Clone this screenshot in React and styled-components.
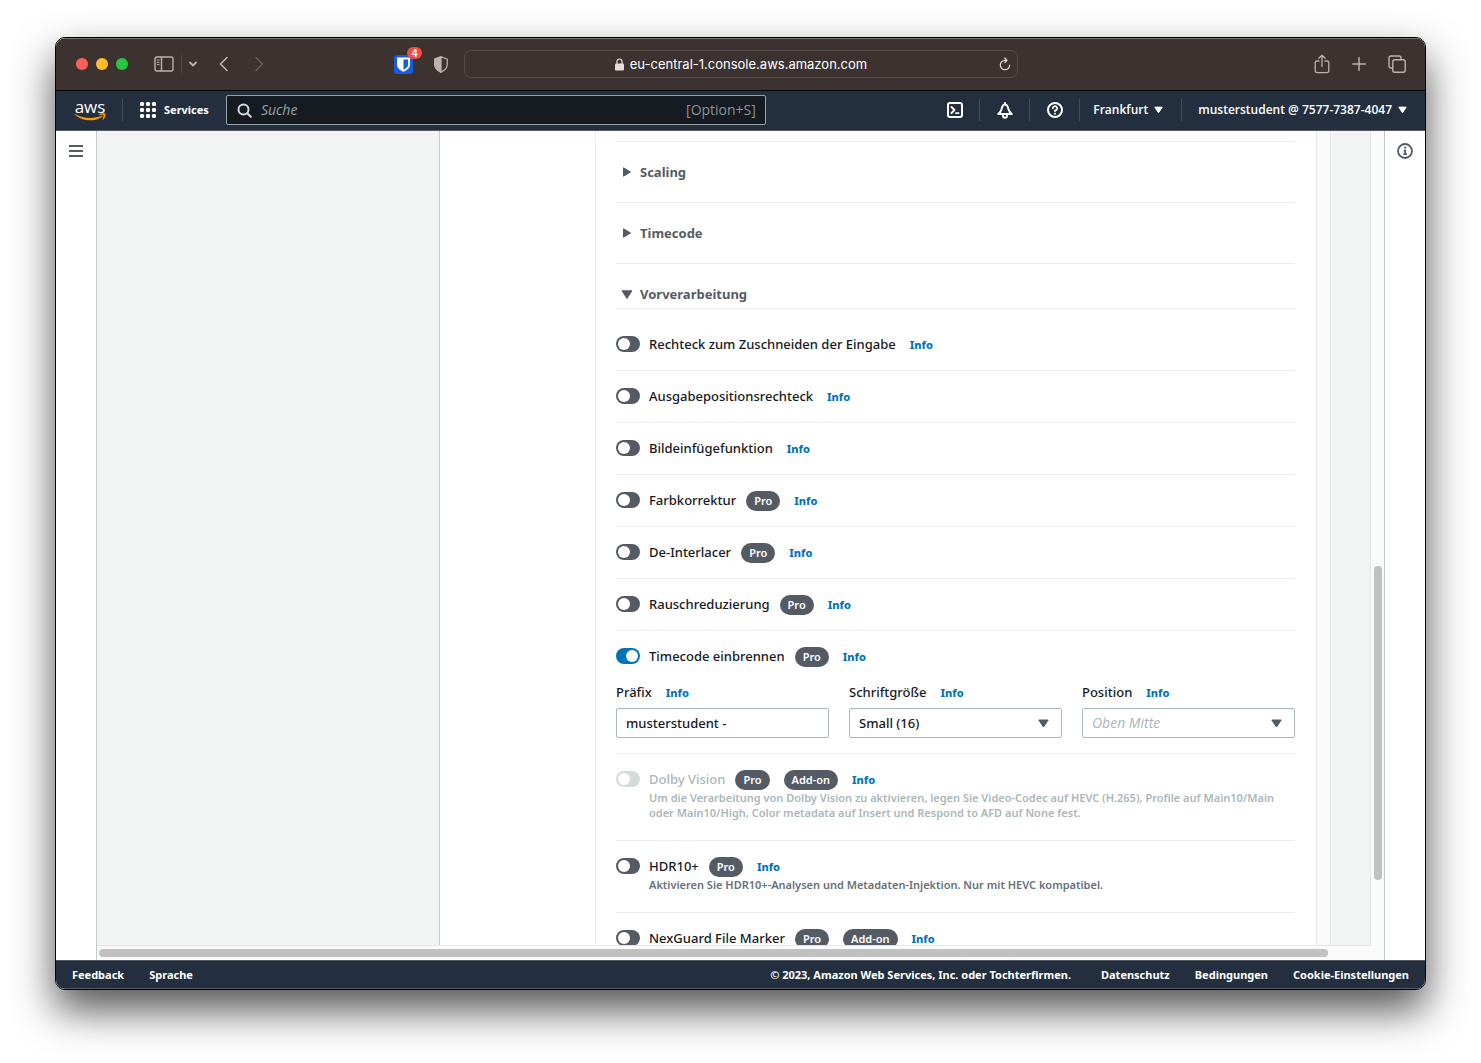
import React from "react";
import styled, { createGlobalStyle, css } from "styled-components";

const GlobalStyle = createGlobalStyle`
  *, *::before, *::after { box-sizing: border-box; }
  body {
    margin: 0;
    background: #fff;
    color: #16191f;
    font-family: "Noto Sans", "Open Sans", sans-serif;
    font-size: 13px;
    font-weight: 500;
    line-height: 20px;
  }
  button, input, select { font: inherit; color: inherit; margin: 0; }
`;

const Desktop = styled.div`
  display: flex;
  height: 100vh;
  padding: 37px 55px 73px;
  overflow: hidden;
`;

const Window = styled.div`
  flex: 1;
  min-width: 0;
  display: flex;
  flex-direction: column;
  border: 1px solid #050505;
  border-radius: 10px;
  overflow: hidden;
  background: #fff;
  box-shadow: 0 20px 42px rgba(0, 0, 0, 0.68);
`;

/* Browser chrome */

const TitleBar = styled.div`
  flex: none;
  display: grid;
  grid-template-columns: 408px minmax(0, 554px) 1fr;
  align-items: center;
  height: 53px;
  padding-bottom: 1px;
  background: #3c3331;
  border-top: 1px solid #746d6b;
  border-bottom: 1px solid #000;
  color: #bab2b0;
`;

const ChromeGroup = styled.div`
  display: flex;
  align-items: center;
  justify-content: ${(p) => (p.$end ? "flex-end" : "flex-start")};
  gap: ${(p) => p.$gap || 0}px;
  padding: ${(p) => p.$pad || "0"};
`;

const Spacer = styled.div`
  flex: ${(p) => p.$grow || 1};
`;

const IconButton = styled.button`
  display: flex;
  align-items: center;
  justify-content: center;
  padding: 0;
  border: 0;
  background: none;
  color: ${(p) => (p.$dim ? "#695f5d" : "inherit")};
  cursor: pointer;
  svg { display: block; }
`;

const Light = styled.button`
  width: 12px;
  height: 12px;
  padding: 0;
  border: 0;
  border-radius: 50%;
  background: ${(p) => p.$color};
`;

const ChromeDivider = styled.span`
  width: 1px;
  height: 18px;
  background: #544b49;
`;

const Extension = styled(IconButton)`
  position: relative;
`;

const Count = styled.span`
  position: absolute;
  top: -8px;
  right: -9px;
  width: 15px;
  height: 12px;
  border-radius: 6px;
  background: #fb4943;
  color: #fff;
  font: 600 10px/12px Inter, sans-serif;
  text-align: center;
`;

const AddressBar = styled.div`
  display: grid;
  grid-template-columns: 24px 1fr 24px;
  align-items: center;
  height: 28px;
  border: 1px solid #544c49;
  border-radius: 7px;
  color: #e4dfde;
`;

const Address = styled.div`
  display: flex;
  align-items: center;
  justify-content: center;
  gap: 6px;
  color: #fff;
  font: 400 13px/20px Inter, sans-serif;
`;

/* Console navigation */

const NavBar = styled.header`
  flex: none;
  display: flex;
  align-items: center;
  height: 40px;
  padding: 0 18px 1px;
  background: #232f3e;
  border-bottom: 1px solid #545b64;
  color: #fff;
  font: 600 12px/20px "Open Sans", sans-serif;
`;

const Logo = styled.a`
  display: flex;
  flex-direction: column;
  align-items: center;
  width: 32px;
  margin-right: 16px;
  color: #fff;
  text-decoration: none;
  font: 500 17px/13px "Open Sans", sans-serif;
`;

const NavDivider = styled.span`
  flex: none;
  width: 1px;
  height: 22px;
  background: #414c59;
`;

const Services = styled(IconButton)`
  gap: 8px;
  margin: 0 17px;
  font: 700 11px/20px "Noto Sans", sans-serif;
`;

const SearchBox = styled.label`
  display: flex;
  align-items: center;
  flex: 0 1 540px;
  gap: 9px;
  height: 30px;
  padding: 0 9px 0 10px;
  border: 1px solid #95a5a6;
  border-radius: 2px;
  background: #161a21;
  color: #d5dbdb;
  font-size: 14px;
  font-weight: 400;
  input {
    flex: 1;
    min-width: 0;
    padding: 0;
    border: 0;
    outline: 0;
    background: none;
  }
  input::placeholder { color: #95a5a6; font-style: italic; opacity: 1; }
`;

const Shortcut = styled.span`
  color: #879596;
`;

const NavIcon = styled(IconButton)`
  width: 49px;
  height: 38px;
`;

const NavMenu = styled(IconButton)`
  gap: 6px;
  padding-left: ${(p) => p.$left}px;
  padding-right: ${(p) => p.$right || 0}px;
  white-space: nowrap;
`;

/* Page body */

const Body = styled.div`
  flex: 1;
  min-height: 0;
  display: flex;
`;

const Rail = styled.aside`
  flex: none;
  display: flex;
  flex-direction: column;
  align-items: center;
  width: 41px;
  padding-top: 12px;
  color: #545b64;
  ${(p) => (p.$right ? "border-left" : "border-right")}: 1px solid #c3caca;
`;

const Viewport = styled.div`
  flex: 1;
  min-width: 0;
  display: grid;
  grid-template-columns: minmax(0, 1fr) 13px;
  grid-template-rows: minmax(0, 1fr) 14px;
  background: #fafafa;
`;

const Scroller = styled.main`
  display: flex;
  min-width: 0;
  overflow: hidden;
  border-right: 1px solid #e7e7e7;
  border-bottom: 1px solid #e7e7e7;
`;

const Gutter = styled.div`
  flex: 0 0 ${(p) => p.$width}px;
  background: ${(p) => p.$color};
  border-right: ${(p) => (p.$line ? `1px solid ${p.$line}` : "0")};
`;

const Panel = styled.section`
  flex: 1;
  min-width: 0;
  padding: 10px 21px 0 20px;
  border-left: 1px solid #eaeded;
  border-right: 1px solid #e3e6e6;
  background: #fff;
`;

const VerticalTrack = styled.div`
  display: flex;
  flex-direction: column;
  padding: 0 2px 0 3px;
`;

const HorizontalTrack = styled.div`
  grid-column: 1 / -1;
  padding: 3px 0 3px 2px;
`;

const Thumb = styled.div`
  border-radius: 4px;
  background: #c1c1c1;
  ${(p) =>
    p.$vertical
      ? css`flex: 314;`
      : css`height: 8px; width: 1229px; max-width: 96%;`}
`;

const SectionToggle = styled.button`
  display: flex;
  align-items: center;
  gap: 7px;
  width: 100%;
  height: ${(p) => (p.$open ? 46 : 61)}px;
  padding: 0 5px;
  padding-top: ${(p) => (p.$open ? 16 : 0)}px;
  border: 0;
  border-top: 1px solid #eaeded;
  border-bottom: ${(p) => (p.$open ? "1px solid #eaeded" : "0")};
  background: none;
  color: #545b64;
  font-weight: 700;
  text-align: left;
`;

const Options = styled.div`
  padding-top: 10px;
`;

const Option = styled.div`
  padding: 15px 0 ${(p) => (p.$tall ? 20 : 15)}px;
  border-bottom: 1px solid #eaeded;
`;

const OptionHead = styled.div`
  display: flex;
  align-items: flex-end;
  height: 21px;
`;

const Switch = styled.input`
  appearance: none;
  flex: none;
  align-self: flex-start;
  display: flex;
  align-items: center;
  justify-content: flex-start;
  width: 24px;
  height: 16px;
  && { margin-top: 2px; }
  padding: 0 2px;
  border-radius: 8px;
  background: #545b64;
  &::before {
    content: "";
    width: 12px;
    height: 12px;
    border-radius: 50%;
    background: #fff;
  }
  &:checked { background: #0073bb; justify-content: flex-end; }
  &:disabled { background: #d5dbdb; }
`;

const OptionLabel = styled.label`
  align-self: flex-start;
  padding-left: 9px;
  color: ${(p) => (p.$muted ? "#aab7b8" : "#16191f")};
  white-space: nowrap;
`;

const Badges = styled.span`
  display: flex;
  gap: 14px;
  padding-left: 10px;
`;

const Badge = styled.span`
  height: 20px;
  padding: 0 8px;
  border-radius: 10px;
  background: #545b64;
  color: #fff;
  font-size: 11px;
  font-weight: 600;
`;

const Info = styled.a`
  padding-left: 14px;
  color: #0073bb;
  font-size: 11px;
  font-weight: 800;
  text-decoration: none;
`;

const Description = styled.p`
  margin: 0;
  padding-left: 33px;
  color: ${(p) => (p.$muted ? "#aab7b8" : "#687078")};
  font-size: 11px;
  font-weight: 600;
  line-height: 15px;
`;

const Fields = styled.div`
  display: grid;
  grid-template-columns: repeat(3, minmax(0, 1fr));
  gap: 20px;
  padding-top: 15px;
`;

const FieldHead = styled.div`
  display: flex;
  align-items: flex-end;
  height: 21px;
  margin-bottom: 5px;
  label { align-self: flex-start; }
`;

const control = css`
  width: 100%;
  height: 30px;
  padding: 0 9px;
  border: 1px solid #aab7b8;
  border-radius: 2px;
  background: #fff;
  outline: 0;
`;

const TextInput = styled.input`
  ${control}
`;

const SelectShell = styled.div`
  display: grid;
  align-items: center;
  > * { grid-area: 1 / 1; }
  > svg { justify-self: end; margin-right: 13px; pointer-events: none; }
`;

const Select = styled.select`
  ${control}
  appearance: none;
  ${(p) => p.$empty && css`color: #aab7b8; font: italic 400 14px/20px "Open Sans", sans-serif;`}
`;

const Footer = styled.footer`
  flex: none;
  display: flex;
  align-items: center;
  gap: 25px;
  height: 29px;
  padding: 0 16px;
  background: #232f3e;
  border-top: 1px solid #545b64;
  border-bottom: 1px solid #545b64;
  color: #fff;
  font-size: 11px;
  font-weight: 700;
  white-space: nowrap;
  a { color: inherit; text-decoration: none; }
`;

const Legal = styled.div`
  display: flex;
  gap: 25px;
  margin-left: auto;
`;

const Copyright = styled.span`
  padding-right: 5px;
`;

/* Icons */

const Stroke = ({ w, h, sw = 1.4, children }) => (
  <svg width={w} height={h} viewBox={`0 0 ${w} ${h}`} fill="none" stroke="currentColor" strokeWidth={sw} strokeLinecap="round" strokeLinejoin="round" aria-hidden="true">
    {children}
  </svg>
);

const Caret = ({ right, w = 10, h = 8 }) => (
  <svg width={right ? 12 : w} height={right ? 10 : h} viewBox={right ? "0 0 12 10" : "0 0 10 8"} fill="currentColor" stroke="currentColor" strokeLinejoin="round" aria-hidden="true">
    <path d={right ? "M2.5 .8 L9.5 5 L2.5 9.2Z" : "M.8 .8 H9.2 L5 7.2Z"} />
  </svg>
);

const SidebarIcon = () => (
  <Stroke w={20} h={16} sw={1.4}>
    <rect x="1" y="1" width="18" height="14" rx="2" />
    <path d="M7.5 1v14" />
    <path d="M3.2 4h2M3.2 6.3h2M3.2 8.6h2" strokeWidth="1" />
  </Stroke>
);

const BitwardenIcon = () => (
  <svg width="19" height="19" viewBox="0 0 19 19" aria-hidden="true">
    <rect width="19" height="19" rx="3" fill="#175ddc" />
    <path d="M3 2.5h13v7.2c0 3.4-3.2 5.5-6.5 7.1C6.2 15.2 3 13.1 3 9.7Z" fill="#fff" />
    <path d="M9.5 4.4h4.6v5.4c0 2-1.9 3.6-4.6 5Z" fill="#175ddc" />
  </svg>
);

const ShieldIcon = () => (
  <svg width="14" height="17" viewBox="0 0 14 17" fill="none" stroke="currentColor" strokeWidth="1.3" strokeLinejoin="round" aria-hidden="true">
    <path d="M7 .8 13.2 3v5.5c0 3.5-2.7 6-6.2 7.7C3.5 14.5 .8 12 .8 8.5V3Z" />
    <path d="M7 .8v15.4C3.5 14.5 .8 12 .8 8.5V3Z" fill="currentColor" />
  </svg>
);

const LockIcon = () => (
  <svg width="9" height="13" viewBox="0 0 9 13" fill="none" aria-hidden="true">
    <rect x="0" y="5.5" width="9" height="7" rx="1.2" fill="#e4dfde" />
    <path d="M2 6V3.5a2.5 2.5 0 0 1 5 0V6" stroke="#e4dfde" strokeWidth="1.2" />
  </svg>
);

const AppsIcon = () => (
  <svg width="16" height="16" viewBox="0 0 16 16" fill="currentColor" aria-hidden="true">
    {[0, 6, 12].map((y) => [0, 6, 12].map((x) => <rect key={`${x}-${y}`} x={x} y={y} width="4" height="4" rx="1.2" />))}
  </svg>
);

const Smile = () => (
  <svg width="32" height="8" viewBox="0 0 32 8" fill="#ff9900" aria-hidden="true">
    <path d="M.2 1.1C.2 .8 .6 .7 .9 .9 9 5.6 19.5 6.1 27.7 2.8c.7-.3 1.2 .4 .6 .9C21 8.9 8.3 9 .2 1.1Z" />
    <path d="M24.8 1.4C26.9 0 30.6 0 31.3 .7c.6 .8-.2 4.3-2.2 6-.4 .3-.7 .1-.5-.3 .5-1.2 1.4-3.7 .9-4.3-.5-.6-3-.4-4.4-.2-.4 0-.6-.3-.3-.5Z" />
  </svg>
);

const DownArrow = () => (
  <svg width="11" height="9" viewBox="0 0 11 9" fill="#545b64" stroke="#545b64" strokeLinejoin="round" aria-hidden="true">
    <path d="M.8 1h9.4L5.5 8Z" />
  </svg>
);

/* Content */

const OPTIONS = [
  { id: "crop", label: "Rechteck zum Zuschneiden der Eingabe" },
  { id: "rect", label: "Ausgabepositionsrechteck" },
  { id: "insert", label: "Bildeinfügefunktion" },
  { id: "color", label: "Farbkorrektur", badges: ["Pro"] },
  { id: "deint", label: "De-Interlacer", badges: ["Pro"] },
  { id: "noise", label: "Rauschreduzierung", badges: ["Pro"] },
  { id: "burnin", label: "Timecode einbrennen", badges: ["Pro"], on: true, fields: true },
  {
    id: "dolby",
    label: "Dolby Vision",
    badges: ["Pro", "Add-on"],
    disabled: true,
    text: "Um die Verarbeitung von Dolby Vision zu aktivieren, legen Sie Video-Codec auf HEVC (H.265), Profile auf Main10/Main oder Main10/High, Color metadata auf Insert und Respond to AFD auf None fest.",
  },
  {
    id: "hdr",
    label: "HDR10+",
    badges: ["Pro"],
    text: "Aktivieren Sie HDR10+-Analysen und Metadaten-Injektion. Nur mit HEVC kompatibel.",
  },
  { id: "nexguard", label: "NexGuard File Marker", badges: ["Pro", "Add-on"] },
];

function Field({ id, label, children }) {
  return (
    <div>
      <FieldHead>
        <label htmlFor={id}>{label}</label>
        <Info href="#info">Info</Info>
      </FieldHead>
      {children}
    </div>
  );
}

function BurnInFields() {
  return (
    <Fields>
      <Field id="prefix" label="Präfix">
        <TextInput id="prefix" type="text" defaultValue="musterstudent -" />
      </Field>
      <Field id="fontsize" label="Schriftgröße">
        <SelectShell>
          <Select id="fontsize" defaultValue="16">
            <option value="16">Small (16)</option>
          </Select>
          <DownArrow />
        </SelectShell>
      </Field>
      <Field id="position" label="Position">
        <SelectShell>
          <Select id="position" defaultValue="" $empty>
            <option value="">Oben Mitte</option>
          </Select>
          <DownArrow />
        </SelectShell>
      </Field>
    </Fields>
  );
}

function OptionRow({ id, label, badges, on, disabled, text, fields }) {
  return (
    <Option $tall={Boolean(text)}>
      <OptionHead>
        <Switch type="checkbox" id={id} defaultChecked={on} disabled={disabled} />
        <OptionLabel htmlFor={id} $muted={disabled}>{label}</OptionLabel>
        {badges && (
          <Badges>
            {badges.map((b) => <Badge key={b}>{b}</Badge>)}
          </Badges>
        )}
        <Info href="#info">Info</Info>
      </OptionHead>
      {text && <Description $muted={disabled}>{text}</Description>}
      {fields && <BurnInFields />}
    </Option>
  );
}

export default function App() {
  return (
    <>
      <GlobalStyle />
      <Desktop>
        <Window>
          <TitleBar>
            <ChromeGroup $pad="0 16px 0 20px">
              <ChromeGroup $gap={8}>
                <Light $color="#ff5f57" aria-label="Close" />
                <Light $color="#febc2e" aria-label="Minimize" />
                <Light $color="#28c840" aria-label="Zoom" />
              </ChromeGroup>
              <ChromeGroup $gap={7} $pad="0 0 0 26px">
                <IconButton aria-label="Sidebar"><SidebarIcon /></IconButton>
                <ChromeDivider />
                <IconButton aria-label="Tab groups">
                  <Stroke w={8} h={6} sw={1.8}><path d="M1 1.5 4 4.5 7 1.5" /></Stroke>
                </IconButton>
              </ChromeGroup>
              <ChromeGroup $gap={27} $pad="0 0 0 22px">
                <IconButton aria-label="Back">
                  <Stroke w={9} h={16} sw={1.6}><path d="M8 1.5 1.5 8 8 14.5" /></Stroke>
                </IconButton>
                <IconButton aria-label="Forward" $dim>
                  <Stroke w={9} h={16} sw={1.6}><path d="M1 1.5 7.5 8 1 14.5" /></Stroke>
                </IconButton>
              </ChromeGroup>
              <Spacer />
              <ChromeGroup $gap={21}>
                <Extension aria-label="Bitwarden">
                  <BitwardenIcon />
                  <Count>4</Count>
                </Extension>
                <IconButton aria-label="Privacy report"><ShieldIcon /></IconButton>
              </ChromeGroup>
            </ChromeGroup>
            <AddressBar>
              <span />
              <Address>
                <LockIcon />
                eu-central-1.console.aws.amazon.com
              </Address>
              <IconButton aria-label="Reload">
                <Stroke w={12} h={14} sw={1.2}>
                  <path d="M7.5 3.3H6A4.7 4.7 0 1 0 10.7 8" />
                  <path d="M5.8 1 8 3.3 5.8 5.6" />
                </Stroke>
              </IconButton>
            </AddressBar>
            <ChromeGroup $end $gap={22} $pad="0 19px 0 0">
              <IconButton aria-label="Share">
                <Stroke w={16} h={20} sw={1.3}>
                  <path d="M5 7H3a1.8 1.8 0 0 0-1.8 1.8v8A1.8 1.8 0 0 0 3 18.6h10a1.8 1.8 0 0 0 1.8-1.8v-8A1.8 1.8 0 0 0 13 7h-2" />
                  <path d="M8 12.5V1.2M4.8 4.2 8 1.2l3.2 3" />
                </Stroke>
              </IconButton>
              <IconButton aria-label="New tab">
                <Stroke w={14} h={14} sw={1.5}><path d="M7 .8v12.4M.8 7h12.4" /></Stroke>
              </IconButton>
              <IconButton aria-label="Show tabs">
                <Stroke w={18} h={18} sw={1.4}>
                  <rect x="4.8" y="4.8" width="12.4" height="12.4" rx="2" />
                  <path d="M4.5 13H3a2 2 0 0 1-2-2V3a2 2 0 0 1 2-2h8a2 2 0 0 1 2 2v1.5" />
                </Stroke>
              </IconButton>
            </ChromeGroup>
          </TitleBar>

          <NavBar>
            <Logo href="#home">
              aws
              <Smile />
            </Logo>
            <NavDivider />
            <Services>
              <AppsIcon />
              Services
            </Services>
            <SearchBox>
              <Stroke w={15} h={15} sw={2}>
                <circle cx="6.5" cy="6.5" r="5" />
                <path d="m10.3 10.3 3.5 3.5" />
              </Stroke>
              <input type="text" placeholder="Suche" aria-label="Suche" />
              <Shortcut>[Option+S]</Shortcut>
            </SearchBox>
            <Spacer />
            <NavIcon aria-label="CloudShell">
              <Stroke w={16} h={16} sw={2}>
                <rect x="1" y="1" width="14" height="14" rx="2" />
                <path d="M4.5 5 7.5 8l-3 3" strokeWidth="1.8" />
                <path d="M9 11.2h2.5" strokeWidth="1.8" />
              </Stroke>
            </NavIcon>
            <NavDivider />
            <NavIcon aria-label="Benachrichtigungen">
              <Stroke w={16} h={17} sw={2}>
                <path d="M8 1v1.5M1.2 12h13.6c-1.9-1.3-2.7-2.7-3.3-4.8C10.7 4 10 2.6 8 2.6S5.3 4 4.5 7.2C3.9 9.3 3.1 10.7 1.2 12Z" />
                <path d="M6 13.8a2 2 0 0 0 4 0" />
              </Stroke>
            </NavIcon>
            <NavDivider />
            <NavIcon aria-label="Hilfe">
              <Stroke w={16} h={16} sw={2}>
                <circle cx="8" cy="8" r="7" />
                <path d="M5.9 6.3A2.1 2.1 0 1 1 8 8.4v.9" strokeWidth="1.7" />
                <path d="M8 11.7v.1" strokeWidth="1.9" />
              </Stroke>
            </NavIcon>
            <NavDivider />
            <NavMenu $left={13} $right={18}>
              Frankfurt
              <Caret w={9} h={8} />
            </NavMenu>
            <NavDivider />
            <NavMenu $left={16}>
              musterstudent @ 7577-7387-4047
              <Caret w={9} h={8} />
            </NavMenu>
          </NavBar>

          <Body>
            <Rail>
              <IconButton aria-label="Navigation">
                <svg width="14" height="16" viewBox="0 0 14 16" fill="#545b64" aria-hidden="true">
                  <path d="M0 2h14v2H0zM0 7h14v2H0zM0 12h14v2H0z" />
                </svg>
              </IconButton>
            </Rail>
            <Viewport>
              <Scroller>
                <Gutter $width={343} $color="#f2f3f3" $line="#c5cbcb" />
                <Gutter $width={155} $color="#fff" />
                <Panel>
                  <SectionToggle><Caret right />Scaling</SectionToggle>
                  <SectionToggle><Caret right />Timecode</SectionToggle>
                  <SectionToggle $open><Caret w={12} h={9} />Vorverarbeitung</SectionToggle>
                  <Options>
                    {OPTIONS.map((o) => <OptionRow key={o.id} {...o} />)}
                  </Options>
                </Panel>
                <Gutter $width={14} $color="#fafafa" $line="#e7e9e9" />
                <Gutter $width={39} $color="#f2f3f3" />
              </Scroller>
              <VerticalTrack>
                <Spacer $grow={435} />
                <Thumb $vertical />
                <Spacer $grow={66} />
              </VerticalTrack>
              <HorizontalTrack><Thumb /></HorizontalTrack>
            </Viewport>
            <Rail $right>
              <IconButton aria-label="Hilfebereich">
                <Stroke w={16} h={16} sw={1.8}>
                  <circle cx="8" cy="8" r="7" />
                  <path d="M6.7 7.5H8.2V11.2M6.3 11.2h3.6" strokeLinecap="butt" />
                  <path d="M7.2 4.7h2" strokeLinecap="butt" />
                </Stroke>
              </IconButton>
            </Rail>
          </Body>

          <Footer>
            <a href="#feedback">Feedback</a>
            <a href="#sprache">Sprache</a>
            <Legal>
              <Copyright>© 2023, Amazon Web Services, Inc. oder Tochterfirmen.</Copyright>
              <a href="#datenschutz">Datenschutz</a>
              <a href="#bedingungen">Bedingungen</a>
              <a href="#cookies">Cookie-Einstellungen</a>
            </Legal>
          </Footer>
        </Window>
      </Desktop>
    </>
  );
}
